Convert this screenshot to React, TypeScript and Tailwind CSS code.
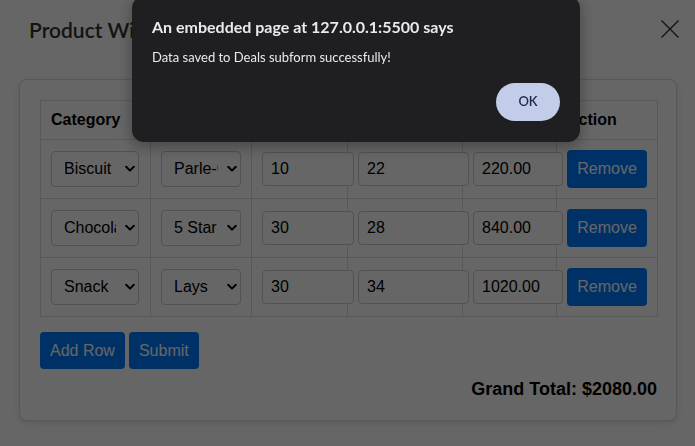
import React from "react";

type Row = { cat: string; prod: string; qty: string; price: string; total: string };

const rows: Row[] = [
  { cat: "Biscuit", prod: "Parle-G", qty: "10", price: "22", total: "220.00" },
  { cat: "Chocolate", prod: "5 Star", qty: "30", price: "28", total: "840.00" },
  { cat: "Snack", prod: "Lays", qty: "30", price: "34", total: "1020.00" },
];

function Chevron() {
  return (
    <svg width="10" height="7" viewBox="0 0 10 7" className="pointer-events-none absolute right-[4px] top-1/2 -translate-y-1/2">
      <path d="M1.2 1.3L5 5.1L8.8 1.3" stroke="#000" strokeWidth="2" fill="none" strokeLinecap="round" strokeLinejoin="round" />
    </svg>
  );
}

function SelectBox({ value, options, className }: { value: string; options: string[]; className: string }) {
  return (
    <div className={"relative inline-block align-middle " + className}>
      <select
        defaultValue={value}
        className="block h-[36px] w-full appearance-none rounded-[4px] border border-[#ccc] bg-white pl-[12px] pr-[22px] text-[16px] leading-[18px] text-black outline-none"
      >
        {options.map((o) => (
          <option key={o} value={o}>
            {o}
          </option>
        ))}
      </select>
      <Chevron />
    </div>
  );
}

function TextInput({ value, className }: { value: string; className: string }) {
  return (
    <input
      type="text"
      defaultValue={value}
      className={"h-[34px] rounded-[4px] border border-[#ccc] bg-white px-[8px] align-middle text-[16px] text-black outline-none " + className}
    />
  );
}

const cats = ["Biscuit", "Chocolate", "Snack"];
const prods = ["Parle-G", "5 Star", "Lays"];

export default function App() {
  const cell = "border border-[#ddd] px-[10px] py-[10px] align-middle text-left";
  return (
    <div className="relative min-h-screen overflow-hidden bg-white font-['Liberation_Sans',Arial,sans-serif] text-black">
      <div className="flex h-[62px] items-start justify-between pl-[29px] pr-[16px]">
        <h2 className="mt-[17px] font-['Lato',sans-serif] text-[21px] font-semibold leading-[26px] text-[#333]">
          Product Wise Details
        </h2>
        <svg width="18" height="18" viewBox="0 0 18 18" className="mt-[20px]">
          <path d="M0.5 0.5L17.5 17.5M17.5 0.5L0.5 17.5" stroke="#333" strokeWidth="1.4" />
        </svg>
      </div>

      <div className="ml-[19px] mt-[17px] w-[658px] rounded-[8px] border border-[#ddd] bg-white py-[20px] pl-[20px] pr-[19px] shadow-[0_2px_6px_rgba(0,0,0,0.12)]">
        <table className="w-[617px] table-fixed border-collapse">
          <colgroup>
            <col className="w-[110px]" />
            <col className="w-[101px]" />
            <col className="w-[96px]" />
            <col className="w-[115px]" />
            <col className="w-[94px]" />
            <col className="w-[101px]" />
          </colgroup>
          <thead>
            <tr>
              <th className={cell + " text-[16px] font-bold leading-[18px]"}>Category</th>
              <th className={cell + " text-[16px] font-bold leading-[18px]"}>Product</th>
              <th className={cell + " text-[16px] font-bold leading-[18px]"}>Quantity</th>
              <th className={cell + " text-[16px] font-bold leading-[18px]"}>Price</th>
              <th className={cell + " text-[16px] font-bold leading-[18px]"}>Total</th>
              <th className={cell + " text-[16px] font-bold leading-[18px]"}>Action</th>
            </tr>
          </thead>
          <tbody>
            {rows.map((r) => (
              <tr key={r.cat}>
                <td className={cell}>
                  <SelectBox value={r.cat} options={cats} className="w-[88px]" />
                </td>
                <td className={cell}>
                  <SelectBox value={r.prod} options={prods} className="w-[80px]" />
                </td>
                <td className={cell}>
                  <TextInput value={r.qty} className="w-[92px]" />
                </td>
                <td className={cell}>
                  <TextInput value={r.price} className="w-[111px]" />
                </td>
                <td className={cell}>
                  <TextInput value={r.total} className="w-[90px]" />
                </td>
                <td className={cell}>
                  <button className="h-[38px] w-[80px] rounded-[4px] bg-[#007bff] text-[16px] text-white">Remove</button>
                </td>
              </tr>
            ))}
          </tbody>
        </table>

        <div className="mt-[15px] flex gap-[4px]">
          <button className="h-[37px] rounded-[4px] bg-[#007bff] px-[10px] text-[16px] text-white">Add Row</button>
          <button className="h-[37px] rounded-[4px] bg-[#007bff] px-[10px] text-[16px] text-white">Submit</button>
        </div>

        <div className="mt-[10px] text-right text-[18px] font-bold leading-[21px]">Grand Total: $2080.00</div>
      </div>

      <div className="fixed inset-0 bg-black/60" />

      <div className="fixed left-[132px] top-[-4px] w-[448px] rounded-[12px] bg-[#1f1f21] px-[20px] pb-[21px] pt-[21px] font-['Lato',sans-serif] shadow-[0_4px_16px_rgba(0,0,0,0.35)]">
        <div className="text-[16px] font-bold leading-[20px] text-[#e8eaed]">An embedded page at 127.0.0.1:5500 says</div>
        <div className="mt-[11px] text-[13px] leading-[18px] text-[#e8eaed]">Data saved to Deals subform successfully!</div>
        <div className="mt-[17px] flex justify-end">
          <button className="h-[38px] w-[64px] rounded-full bg-[#c3cdea] text-[13px] font-semibold text-[#1d2a44]">OK</button>
        </div>
      </div>
    </div>
  );
}
